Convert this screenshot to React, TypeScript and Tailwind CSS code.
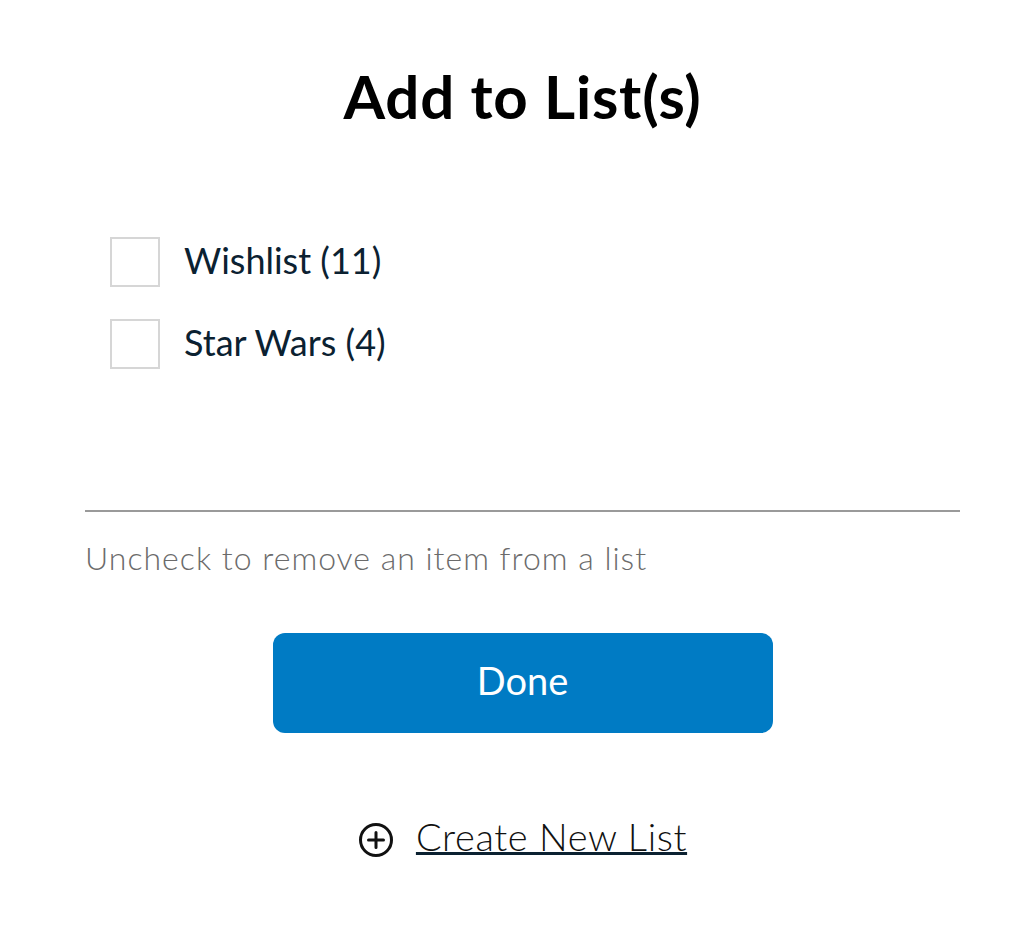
import { useState } from 'react';

const LISTS = [
    { id: 'wishlist', label: 'Wishlist (11)' },
    { id: 'starwars', label: 'Star Wars (4)' },
];

export default function App() {
    const [checked, setChecked] = useState<Record<string, boolean>>({});

    return (
        <div className="w-[1020px] h-[932px] bg-white pl-[85px] pr-[60px] font-['Lato',sans-serif]">
            <div className="flex flex-col">
                <h1 className="pt-[61px] text-center text-[60px] leading-[70px] tracking-[0.8px] font-bold text-black">
                    Add to List(s)
                </h1>

                {/* Lists */}
                <div className="mt-[106px] pl-[25px] flex flex-col gap-[32px]">
                    {LISTS.map((l) => (
                        <label key={l.id} className="flex items-center gap-[24px] cursor-pointer">
                            <input
                                type="checkbox"
                                checked={!!checked[l.id]}
                                onChange={(e) => setChecked({ ...checked, [l.id]: e.target.checked })}
                                className="appearance-none w-[50px] h-[50px] border-2 border-[#d6d6d6] bg-white"
                            />
                            <span className="pb-[4px] text-[36px] leading-[46px] text-[#0b2131]">{l.label}</span>
                        </label>
                    ))}
                </div>

                <div className="mt-[141px] h-[2px] bg-[#9a9a9a]" />

                <p className="mt-[26px] text-[32px] leading-[40px] tracking-[1px] font-light text-[#6b6b6b]">
                    Uncheck to remove an item from a list
                </p>

                <div className="mt-[55px] flex justify-center">
                    <button className="w-[500px] h-[100px] pb-[5px] rounded-[12px] bg-[#007bc4] text-white text-[38px]">
                        Done
                    </button>
                </div>

                <div className="mt-[80px] flex justify-center items-center gap-[22px]">
                    <svg width="36" height="36" viewBox="0 0 36 36" fill="none" stroke="#111" strokeWidth="3">
                        <circle cx="18" cy="18" r="15.5" />
                        <path d="M18 10.5v15M10.5 18h15" strokeLinecap="round" />
                    </svg>
                    <a className="mb-[8px] text-[38px] leading-[46px] tracking-[0.6px] font-light text-[#111] underline decoration-[#0b2131] decoration-[3px] underline-offset-[1px]">
                        Create New List
                    </a>
                </div>
            </div>
        </div>
    );
}
